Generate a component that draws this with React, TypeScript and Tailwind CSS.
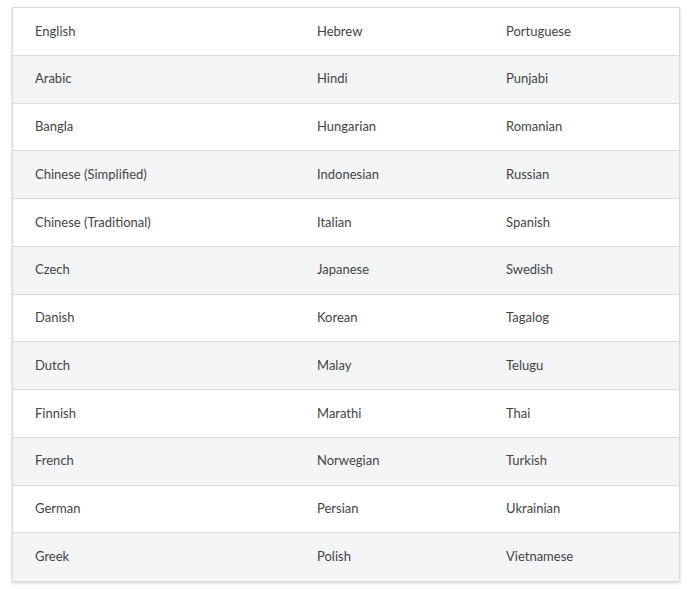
import React from "react";

const rows: [string, string, string][] = [
  ["English", "Hebrew", "Portuguese"],
  ["Arabic", "Hindi", "Punjabi"],
  ["Bangla", "Hungarian", "Romanian"],
  ["Chinese (Simplified)", "Indonesian", "Russian"],
  ["Chinese (Traditional)", "Italian", "Spanish"],
  ["Czech", "Japanese", "Swedish"],
  ["Danish", "Korean", "Tagalog"],
  ["Dutch", "Malay", "Telugu"],
  ["Finnish", "Marathi", "Thai"],
  ["French", "Norwegian", "Turkish"],
  ["German", "Persian", "Ukrainian"],
  ["Greek", "Polish", "Vietnamese"],
];

export default function App() {
  return (
    <div className="bg-white w-[693px] h-[589px] pt-[7px] pl-[12px]" style={{ fontFamily: '"Lato", "Open Sans", sans-serif' }}>
      <div className="w-[668px] border border-[#d9d9d9] shadow-[0_1px_3px_rgba(0,0,0,0.18)]">
        {rows.map((r, i) => (
          <div
            key={i}
            className={`grid grid-cols-[282px_189px_1fr] h-[47.75px] items-center text-[13px] text-[#444444] ${i < rows.length - 1 ? "border-b border-[#dcdcdc]" : ""} ${i % 2 === 1 ? "bg-[#f3f5f7]" : "bg-white"}`}
          >
            <div className="pl-[22px]">{r[0]}</div>
            <div className="pl-[22px]">{r[1]}</div>
            <div className="pl-[22px]">{r[2]}</div>
          </div>
        ))}
      </div>
    </div>
  );
}
